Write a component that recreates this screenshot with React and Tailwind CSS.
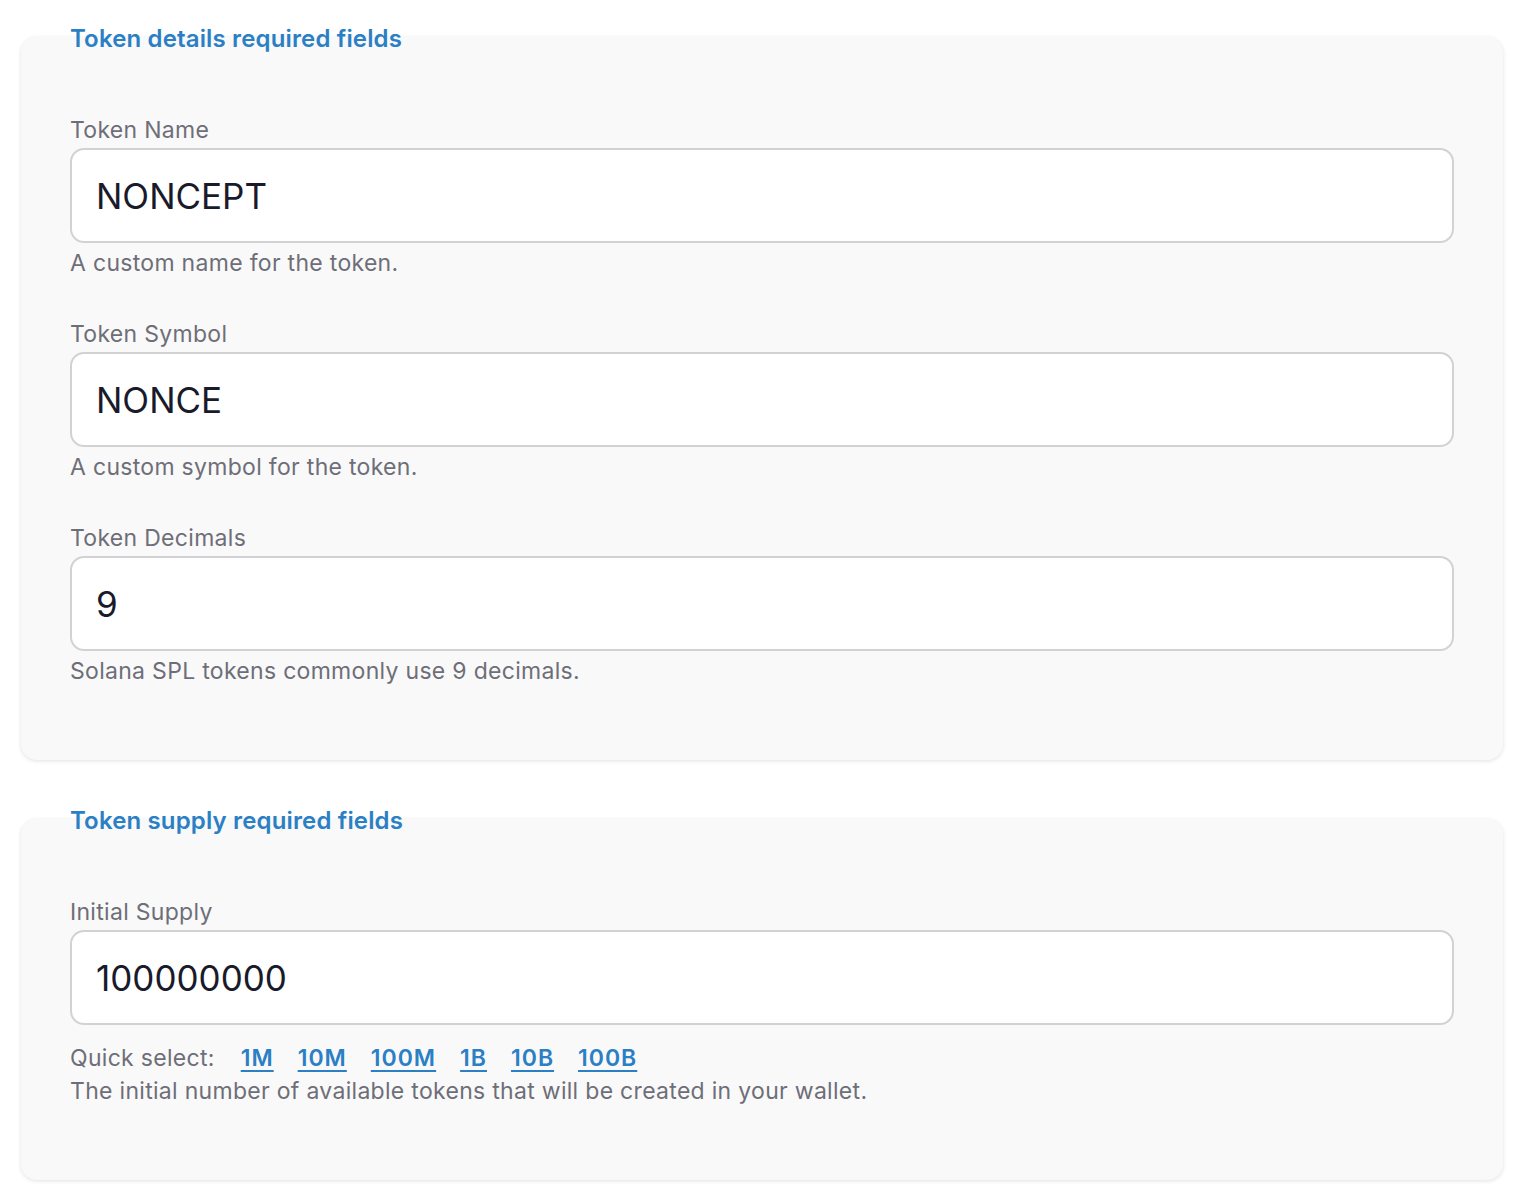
import React from 'react';

const Field = ({ label, value, help }) => (
  <div className="flex flex-col">
    <label className="text-[23px] leading-[28px] tracking-[0.3px] text-[#6e6e78]">{label}</label>
    <input
      readOnly
      value={value}
      className="mt-[4px] h-[95px] w-full rounded-[14px] border-2 border-[#d2d2d4] bg-white px-[24px] text-[35px] text-[#191a2b] outline-none"
    />
    {help}
  </div>
);

const Help = ({ children, className = '' }) => (
  <p className={`text-[23px] leading-[28px] tracking-[0.3px] text-[#6e6e78] ${className}`}>{children}</p>
);

const Card = ({ title, children }) => (
  <section className="flex flex-col rounded-2xl bg-[#f9f9f9] px-[49px] pb-[75px] shadow-[0_1px_4px_rgba(0,0,0,0.12)]">
    <h2 className="-mt-[15px] text-[24px] font-semibold leading-[34px] tracking-[0.15px] text-[#2b7fc4]">{title}</h2>
    <div className="mt-[60px] flex flex-col gap-[43px]">{children}</div>
  </section>
);

export default function App() {
  const quick = ['1M', '10M', '100M', '1B', '10B', '100B'];
  return (
    <div className="min-h-screen bg-white px-[21px] pt-[37px] pb-[22px] font-['Inter',sans-serif]">
      <div className="flex flex-col gap-[59px]">
        <Card title="Token details required fields">
          <Field label="Token Name" value="NONCEPT" help={<Help className="mt-[6px]">A custom name for the token.</Help>} />
          <Field label="Token Symbol" value="NONCE" help={<Help className="mt-[6px]">A custom symbol for the token.</Help>} />
          <Field label="Token Decimals" value="9" help={<Help className="mt-[6px]">Solana SPL tokens commonly use 9 decimals.</Help>} />
        </Card>

        <Card title="Token supply required fields">
          <Field
            label="Initial Supply"
            value="100000000"
            help={
              <>
                <div className="mt-[19px] flex items-center text-[23px] leading-[28px] tracking-[0.3px]">
                  <span className="mr-[26px] text-[#6e6e78]">Quick select:</span>
                  <div className="flex gap-[24px]">
                    {quick.map((q) => (
                      <a key={q} href="#" className="font-semibold tracking-[1px] text-[#2b7fc4] underline underline-offset-[4px] decoration-2">
                        {q}
                      </a>
                    ))}
                  </div>
                </div>
                <Help className="mt-[5px]">The initial number of available tokens that will be created in your wallet.</Help>
              </>
            }
          />
        </Card>
      </div>
    </div>
  );
}
